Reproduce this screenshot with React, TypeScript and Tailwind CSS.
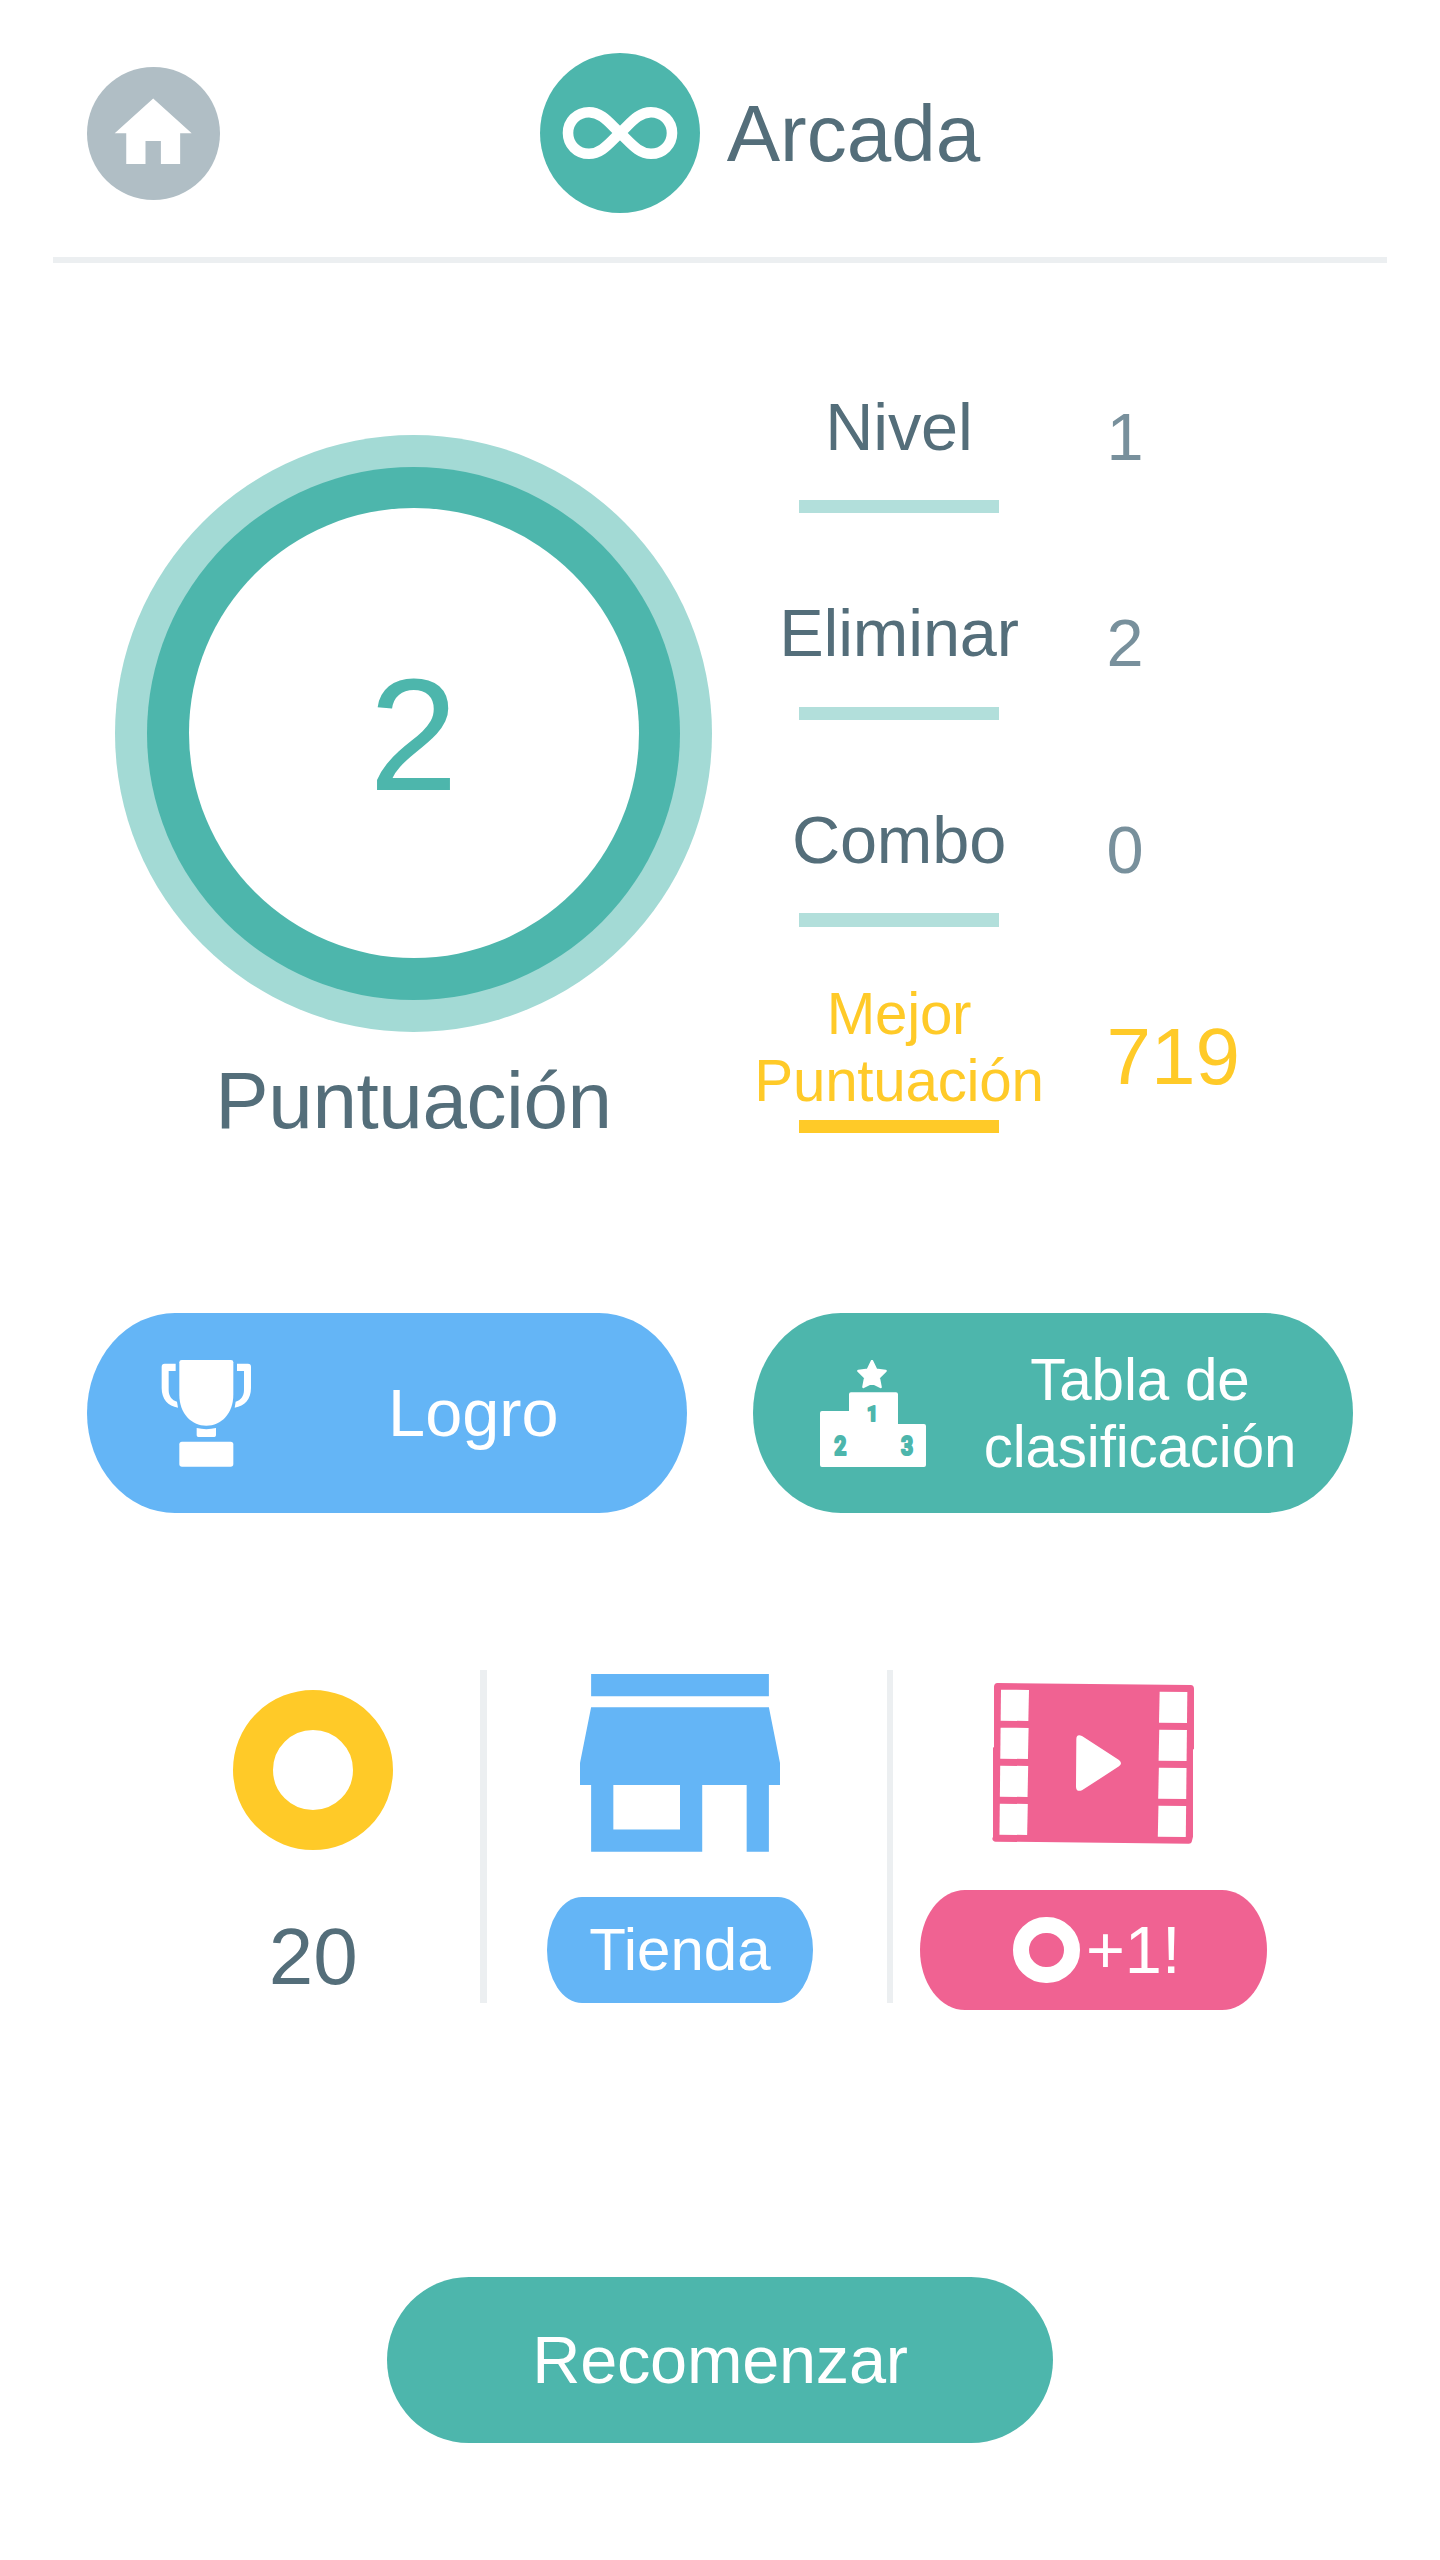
import React from 'react';

function HomeIcon() {
  return (
    <svg viewBox="0 0 24 24" className="h-[92.4px] w-[92.4px]" fill="#fff">
      <path d="M10 20v-6h4v6h5v-8h3L12 3 2 12h3v8z" />
    </svg>
  );
}

function InfinityIcon() {
  return (
    <svg viewBox="-80 -80 160 160" className="h-full w-full" fill="none" stroke="#fff" strokeWidth="10.6">
      <path d="M0 0C-10 -9 -18 -20.8 -31 -20.8C-43 -20.8 -52 -11.5 -52 0C-52 11.5 -43 20.8 -31 20.8C-18 20.8 -10 9 0 0C10 -9 18 -20.8 31 -20.8C43 -20.8 52 -11.5 52 0C52 11.5 43 20.8 31 20.8C18 20.8 10 9 0 0Z" />
    </svg>
  );
}

function TrophyIcon() {
  return (
    <svg viewBox="0 0 320 320" className="h-[106.67px] w-[106.67px] shrink-0" fill="#fff">
      <path d="M86 0H234Q241 0 241 7V104C241 160 205 197 160 197C115 197 79 160 79 104V7Q79 0 86 0Z" />
      <path d="M68 11V33H47V90C47 108 57 122 72 125L75 143C45 138 26 118 26 84V20Q26 11 35 11Z" />
      <path d="M252 11V33H273V90C273 108 263 122 248 125L245 143C275 138 294 118 294 84V20Q294 11 285 11Z" />
      <path d="M131 204Q160 211 189 204V226Q189 231 184 231H136Q131 231 131 226Z" />
      <rect x="79" y="245" width="162" height="75" rx="8" />
    </svg>
  );
}

function PodiumIcon() {
  return (
    <svg viewBox="0 0 106.67 106.67" className="h-[106.67px] w-[106.67px] shrink-0" fill="#fff">
      <path
        d="M52 1L56.1 9.6L65.6 10.9L58.8 17.6L60.6 27L52 22.6L43.4 27L45.2 17.6L38.4 10.9L47.9 9.6Z"
        stroke="#fff"
        strokeWidth="2.4"
        strokeLinejoin="round"
      />
      <path d="M2 51H29V34.300Q29 32.300 31 32.300H76Q78 32.300 78 34.300V64H104Q106 64 106 66V105Q106 107 104 107H2Q0 107 0 105V53Q0 51 2 51Z" />
      <g
        fill="#4db6ac"
        stroke="#4db6ac"
        strokeWidth="2.2"
        strokeLinejoin="round"
        fontFamily="Roboto, sans-serif"
        fontWeight="700"
        textAnchor="middle"
      >
        <text transform="translate(52.4 61) scale(.9 1)" fontSize="21">1</text>
        <text transform="translate(20.300 95) scale(.8 1)" fontSize="26.5">2</text>
        <text transform="translate(87 95) scale(.8 1)" fontSize="26.5">3</text>
      </g>
    </svg>
  );
}

function StoreIcon() {
  return (
    <svg viewBox="3 4 18 16" className="h-[177.78px] w-[200px] shrink-0" fill="#64b5f6">
      <path d="M20 4H4v2h16V4zm1 10v-2l-1-5H4l-1 5v2h1v6h10v-6h4v6h2v-6h1zm-9 4H6v-4h6v4z" />
    </svg>
  );
}

function FilmIcon() {
  const rows = [0, 1, 2, 3];
  return (
    <svg viewBox="276 96 608 487" className="h-[162.33px] w-[202.67px] shrink-0">
      <path
        fill="#f06292"
        d="M292 99L872 105Q882 106 882 116V296L879 299V560L876 572Q875 581 866 581L287 575Q278 574 277 566L279 560V294L282 290V110Q283 99 292 99Z"
      />
      <g fill="#fff">
        {rows.map((i) => (
          <React.Fragment key={i}>
            <path transform={`translate(${-1.2 * i} ${114 * i})`} d="M303 119L387 120L385 213L302 212Z" />
            <path transform={`translate(${-1.2 * i} ${114 * i})`} d="M779 125L862 126L861 219L777 218Z" />
          </React.Fragment>
        ))}
        <path d="M529 268Q529 251 546 258L657 330Q669 340 657 349L546 421Q529 427 528 411Z" />
      </g>
    </svg>
  );
}

function Stat({ label, value, best = false }: { label: React.ReactNode; value: string; best?: boolean }) {
  return (
    <div className="flex h-[206.67px]">
      <div className="flex w-[320px] flex-col items-center pt-[46.67px]">
        <div
          className={
            best
              ? 'flex h-[146.67px] items-center text-center text-[58.33px] leading-[67px] tracking-[-0.25px] text-[#ffca28]'
              : 'flex h-[146.67px] items-center text-[66.67px] leading-[76px] tracking-[-0.15px] text-[#546e7a]'
          }
        >
          {label}
        </div>
        <div className={best ? 'h-[13.33px] w-[200px] bg-[#ffca28]' : 'h-[13.33px] w-[200px] bg-[#b2dfdb]'} />
      </div>
      <div
        className={
          best
            ? 'ml-[47.5px] flex items-center pt-[54.33px] text-[80px] leading-[80px] text-[#ffca28]'
            : 'ml-[47.5px] flex items-center pt-[53.33px] text-[66.67px] leading-[76px] text-[#78909c]'
        }
      >
        {value}
      </div>
    </div>
  );
}

export default function App() {
  return (
    <div className="h-[2560px] w-[1440px] overflow-hidden bg-white font-['Liberation_Sans',Arial,sans-serif]">
      <header className="flex h-[256.67px] items-center pb-[43.33px] pl-[86.67px] pt-[53.33px]">
        <button className="flex h-[133.33px] w-[133.33px] items-center justify-center rounded-full bg-[#b0bec5]">
          <HomeIcon />
        </button>
        <div className="ml-[320px] h-[160px] w-[160px] rounded-full bg-[#4db6ac]">
          <InfinityIcon />
        </div>
        <h1 className="ml-[26.67px] pt-[2px] text-[80px] leading-[80px] text-[#546e7a]">Arcada</h1>
      </header>
      <div className="mx-[53.33px] h-[6.33px] bg-[#eceff1]" />

      <section className="mt-[43.67px] flex h-[826.67px] pl-[115px]">
        <div className="flex w-[597px] flex-col items-center pt-[128px]">
          <div className="flex h-[597px] w-[597px] shrink-0 items-center justify-center rounded-full bg-[#a3dad5]">
            <div className="flex h-[533px] w-[533px] items-center justify-center rounded-full bg-[#4db6ac]">
              <div className="flex h-[450px] w-[450px] items-center justify-center rounded-full bg-white pt-[3px] text-[160px] leading-[160px] text-[#4db6ac]">
                2
              </div>
            </div>
          </div>
          <div className="mt-[29.67px] text-[80px] leading-[80px] tracking-[-0.4px] text-[#546e7a]">Puntuación</div>
        </div>
        <div className="ml-[27px]">
          <Stat label="Nivel" value="1" />
          <Stat label="Eliminar" value="2" />
          <Stat label="Combo" value="0" />
          <Stat
            best
            label={
              <span>
                Mejor
                <br />
                Puntuación
              </span>
            }
            value="719"
          />
        </div>
      </section>

      <section className="mt-[180px] flex gap-[66.67px] px-[86.67px] text-white">
        <button className="flex h-[200px] w-[600px] items-center rounded-[88px/100px] bg-[#64b5f6] pl-[66.67px]">
          <TrophyIcon />
          <span className="flex-1 text-center text-[66.67px] leading-[76px]">Logro</span>
        </button>
        <button className="flex h-[200px] w-[600px] items-center rounded-[88px/100px] bg-[#4db6ac] pl-[66.67px]">
          <PodiumIcon />
          <span className="flex-1 text-center text-[58.33px] leading-[67px] tracking-[-0.15px]">
            Tabla de
            <br />
            clasificación
          </span>
        </button>
      </section>

      <section className="mt-[156.67px] flex h-[333px] pl-[146.67px]">
        <div className="flex w-[333.33px] flex-col items-center pt-[20px]">
          <div className="h-[160px] w-[160px] rounded-full border-[40px] border-[#ffca28]" />
          <div className="mt-[66.67px] text-[80px] leading-[80px] text-[#546e7a]">20</div>
        </div>
        <div className="h-full w-[6.67px] bg-[#eceff1]" />
        <div className="mr-[13.33px] flex w-[386.67px] flex-col items-center pt-[4.4px]">
          <StoreIcon />
          <button className="mt-[44.4px] flex h-[106px] w-[266.67px] shrink-0 items-center justify-center rounded-[35px/53px] bg-[#64b5f6] text-[60px] leading-[67px] text-white">
            Tienda
          </button>
        </div>
        <div className="h-full w-[6.67px] bg-[#eceff1]" />
        <div className="flex w-[400px] flex-col items-center pt-[12px]">
          <FilmIcon />
          <button className="mt-[45.67px] flex h-[120px] w-[346.67px] shrink-0 items-center gap-[6px] rounded-[45px/60px] bg-[#f06292] pl-[93.33px] text-[66.67px] leading-[76px] text-white">
            <span className="h-[66.67px] w-[66.67px] rounded-full border-[16.67px] border-white" />
            +1!
          </button>
        </div>
      </section>

      <div className="mt-[273.67px] flex justify-center">
        <button className="h-[166px] w-[666.67px] rounded-[82px/83px] bg-[#4db6ac] text-[66.67px] leading-[76px] tracking-[-0.25px] text-white">
          Recomenzar
        </button>
      </div>
    </div>
  );
}
